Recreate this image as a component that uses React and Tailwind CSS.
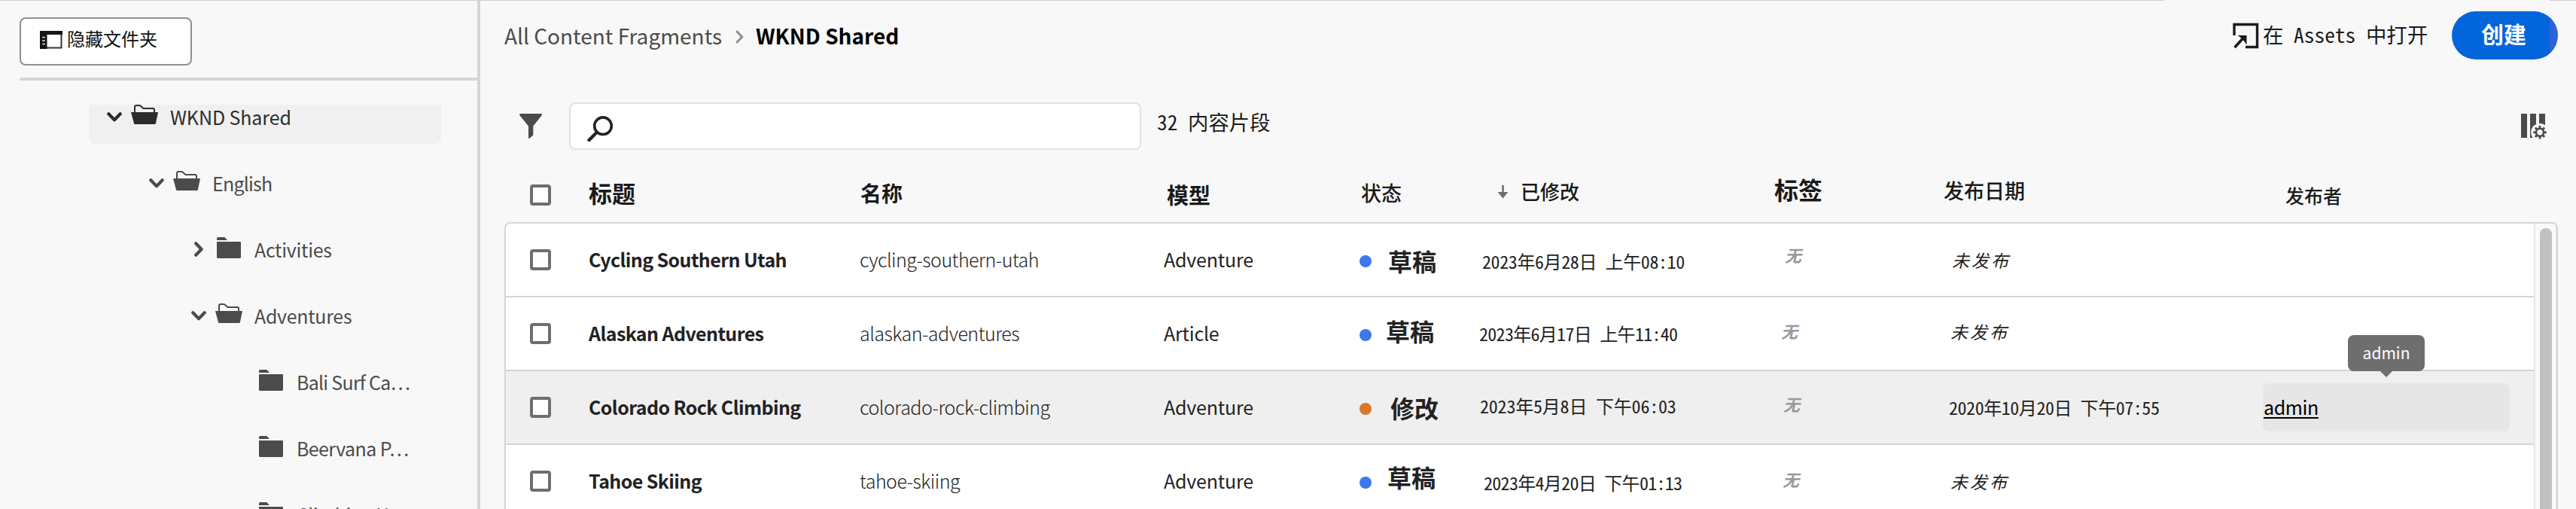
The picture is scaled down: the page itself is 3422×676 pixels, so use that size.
const COLS =
  "grid grid-cols-[110px_360px_404px_260px_159px_392px_225px_424px_360px] items-start";

const TREE = [
  { label: "WKND Shared", indent: "pl-[24px]", state: "open", active: true, tracking: "tracking-[-0.1px]" },
  { label: "English", indent: "pl-[80px]", state: "open", tracking: "tracking-[-0.8px]" },
  { label: "Activities", indent: "pl-[136px]", state: "closed" },
  { label: "Adventures", indent: "pl-[136px]", state: "open" },
  { label: "Bali Surf Ca…", indent: "pl-[192px]", state: "leaf", tracking: "tracking-[-0.75px]" },
  { label: "Beervana P…", indent: "pl-[192px]", state: "leaf", tracking: "tracking-[-0.6px]" },
  { label: "Climbing N…", indent: "pl-[192px]", state: "leaf", tracking: "tracking-[-0.6px]" },
];

const ROWS = [
  {
    title: "Cycling Southern Utah",
    name: "cycling-southern-utah",
    model: "Adventure",
    dot: "bg-[#3b78ee]",
    status: "草稿",
    statusPos: "pl-[22px] pt-[33px]",
    date: "2023年6月28日 上午08:10",
    datePos: "pl-[4px] pt-[38px] tracking-[-0.4px]",
    tagPos: "pl-[14px] pt-[30px]",
    pubPos: "pl-[11px] pt-[37px]",
  },
  {
    title: "Alaskan Adventures",
    name: "alaskan-adventures",
    model: "Article",
    dot: "bg-[#3b78ee]",
    status: "草稿",
    statusPos: "pl-[19px] pt-[28px]",
    date: "2023年6月17日 上午11:40",
    datePos: "pl-0 pt-[36px] tracking-[-0.7px]",
    tagPos: "pl-[9px] pt-[33px]",
    pubPos: "pl-[9px] pt-[34px]",
  },
  {
    title: "Colorado Rock Climbing",
    name: "colorado-rock-climbing",
    model: "Adventure",
    dot: "bg-[#d87829]",
    status: "修改",
    statusPos: "pl-[25px] pt-[32px]",
    date: "2023年5月8日 下午06:03",
    datePos: "pl-[1px] pt-[34px] tracking-[-0.2px]",
    tagPos: "pl-[12px] pt-[32px]",
    published: "2020年10月20日 下午07:55",
    pubPos: "pl-[7px] pt-[36px]",
    publisher: "admin",
  },
  {
    title: "Tahoe Skiing",
    name: "tahoe-skiing",
    model: "Adventure",
    dot: "bg-[#3b78ee]",
    status: "草稿",
    statusPos: "pl-[21px] pt-[26px]",
    date: "2023年4月20日 下午01:13",
    datePos: "pl-[6px] pt-[38px] tracking-[-0.7px]",
    tagPos: "pl-[11px] pt-[34px]",
    pubPos: "pl-[9px] pt-[37px]",
  },
];

function ChevronDown() {
  return (
    <svg className="mt-[10px] h-[13px] w-[20px]" viewBox="0 0 20 13" fill="none" stroke="currentColor" strokeWidth="4.2" strokeLinecap="round" strokeLinejoin="round">
      <path d="M2.3 2.3 10 10.2 17.7 2.3" />
    </svg>
  );
}

function ChevronRight() {
  return (
    <svg className="mt-[6px] ml-[4px] h-[20px] w-[12px]" viewBox="0 0 12 20" fill="none" stroke="currentColor" strokeWidth="4.2" strokeLinecap="round" strokeLinejoin="round">
      <path d="M2.2 2.3 9.6 10 2.2 17.7" />
    </svg>
  );
}

function FolderOpen() {
  return (
    <svg className="h-[26px] w-[36px]" viewBox="0 0 36 26">
      <path d="M5 11V3.2Q5 1 7.2 1H11q1.4 0 2.3 1.2L16.5 5H29.5Q31 5 31 6.5V11" fill="none" stroke="currentColor" strokeWidth="2" />
      <path d="M0 10H36L32.9 25Q32.7 26 31.7 26H5.2Q4.2 26 4 25Z" fill="currentColor" />
    </svg>
  );
}

function FolderClosed() {
  return (
    <svg className="ml-[2px] h-[28px] w-[32px]" viewBox="0 0 32 28" fill="currentColor">
      <path d="M0 4V1.8Q0 0 1.8 0H9.5Q10.6 0 11.3 1L14 4Z" />
      <path d="M0 6H31Q32 6 32 7V26.6Q32 28 30.6 28H1.4Q0 28 0 26.6Z" />
    </svg>
  );
}

function Checkbox({ className }) {
  return <span className={`ml-[32px] block h-[28px] w-[28px] rounded-[4px] border-4 border-[#6e6e6e] bg-white ${className}`} />;
}

function Sidebar() {
  return (
    <aside className="flex w-[638px] shrink-0 flex-col border-r-4 border-[#d5d5d5] pt-[22px]">
      <button className="ml-[26px] flex h-[64px] w-[229px] shrink-0 items-start rounded-[8px] border-2 border-[#909090] bg-white pl-[25px] text-[24px] leading-none text-[#111]">
        <svg className="mt-[16px] h-[24px] w-[30px]" viewBox="0 0 30 24">
          <path d="M1.5 1H28.5V22.5H1.5Z" fill="#fff" stroke="#333" strokeWidth="2" />
          <path d="M0 0H30V5H9.5V24H0Z" fill="#151515" />
          <path d="M3 8.5H7M3 13H7M3 17.5H7" stroke="#ddd" strokeWidth="1.6" />
        </svg>
        <span className="pt-[14px] pl-[6px] whitespace-nowrap">隐藏文件夹</span>
      </button>
      <div className="mt-4 ml-[26px] h-1 w-[608px] shrink-0 rounded-l-full bg-[#d5d5d5]" />
      <ul className="mt-8 ml-[118px] w-[468px] text-[25px] leading-none text-[#4b4b4b]">
        {TREE.map((n) => (
          <li key={n.label} className={`flex h-[88px] items-start ${n.active ? "text-[#2c2c2c]" : ""}`}>
            <div className={`flex h-[52px] w-full items-start rounded-b-lg ${n.indent} ${n.active ? "bg-[#f0f0f0]" : ""}`}>
              <span className="w-8 shrink-0">
                {n.state === "open" && <ChevronDown />}
                {n.state === "closed" && <ChevronRight />}
              </span>
              <span className="w-[52px] shrink-0">{n.state === "open" ? <FolderOpen /> : <FolderClosed />}</span>
              <span className={`pt-[4px] whitespace-nowrap ${n.tracking || "tracking-[-0.3px]"}`}>{n.label}</span>
            </div>
          </li>
        ))}
      </ul>
    </aside>
  );
}

function TopBar() {
  return (
    <header className="flex h-[135px] items-start leading-none">
      <nav className="flex items-start pt-[32px] text-[28px]">
        <span className="w-[307px] whitespace-nowrap text-[#4b4b4b]">All Content Fragments</span>
        <svg className="mt-[7px] h-[18px] w-[11px]" viewBox="0 0 11 18" fill="none" stroke="#8e8e8e" strokeWidth="3" strokeLinecap="round" strokeLinejoin="round">
          <path d="M2 2 8.8 9 2 16" />
        </svg>
        <span className="pl-[16px] font-bold whitespace-nowrap text-black">WKND Shared</span>
      </nav>
      <div className="ml-auto flex items-start">
        <svg className="mt-[29px] h-[35px] w-[35px]" viewBox="0 0 35 35" fill="none" stroke="#1c1c1c">
          <path d="M2 17V2.5H32.5V32.5H17" strokeWidth="3.4" />
          <path d="M2.5 33 14 20.5" strokeWidth="3.6" />
          <path d="M6.5 17H18.5V29.5L14.5 24 10 19.5Z" fill="#1c1c1c" stroke="none" />
        </svg>
        <span className="w-[256px] pt-[31px] pl-[5px] text-[27.4px] whitespace-nowrap text-[#1a1a1a] [font-feature-settings:'hwid']">
          在 Assets 中打开
        </span>
        <button className="mt-[14px] flex h-[64px] w-[141px] items-start overflow-hidden rounded-full bg-[#0265dc] bg-[linear-gradient(90deg,#0265dc_130px,#2d63d6_130px)] pt-[14px] pl-[39px] text-[30px] leading-none font-bold text-white">
          创建
        </button>
      </div>
    </header>
  );
}

function Toolbar() {
  return (
    <div className="flex h-[94px] items-start pl-[20px]">
      <svg className="mt-[15px] h-[33px] w-[30px]" viewBox="0 0 30 33" fill="#4b4b4b">
        <path d="M0.6 0H29.4Q30.3 1 29.6 2.2L18.3 16.5V28.6L13.4 32.8Q12 33.3 12 31.8V16.5L0.4 2.2Q-.3 1 .6 0Z" />
      </svg>
      <div className="ml-[36px] h-[63px] w-[760px] rounded-lg border-2 border-[#e1e1e1] bg-white">
        <svg className="mt-[16px] ml-[22px] h-[35px] w-[35px]" viewBox="0 0 35 35" fill="none" stroke="#222" strokeLinecap="round">
          <circle cx="21" cy="13.2" r="11.3" strokeWidth="3.6" />
          <path d="M13 21.5 2.5 32" strokeWidth="4.4" />
        </svg>
      </div>
      <span className="pt-[12px] pl-[21px] text-[27.4px] leading-none whitespace-nowrap text-[#1a1a1a] [font-feature-settings:'hwid']">
        32 内容片段
      </span>
      <svg className="mt-[15px] mr-[13px] ml-auto h-[36px] w-[36px]" viewBox="0 0 36 36">
        <path d="M0 0H8V32H0ZM12 0H20V32H12ZM24 0H32V20H24Z" fill="#4b4b4b" />
        <circle cx="25" cy="24.7" r="11.8" fill="#f8f8f8" />
        <circle cx="25" cy="24.7" r="5" fill="none" stroke="#4b4b4b" strokeWidth="2.6" />
        <path d="M25 16V19M25 30.4V33.4M16.3 24.7H19.3M30.7 24.7H33.7M18.85 18.55 21 20.7M29 28.7 31.15 30.85M18.85 30.85 21 28.7M29 20.7 31.15 18.55" stroke="#4b4b4b" strokeWidth="2.9" />
      </svg>
    </div>
  );
}

function TableHead() {
  return (
    <div className={`ml-[2px] h-[65px] leading-none font-medium text-[#1a1a1a] ${COLS}`}>
      <Checkbox className="mt-[15px]" />
      <span className="pt-[10px] text-[31px] font-bold">标题</span>
      <span className="pt-[12px] pl-px text-[28px] font-bold">名称</span>
      <span className="pt-[14px] pl-[4px] text-[29px] font-bold">模型</span>
      <span className="pt-[12px] pl-[2px] text-[27px]">状态</span>
      <span className="flex items-start pl-[24px] text-[26px]">
        <svg className="mt-[16px] mr-[16px] h-[18px] w-[15px]" viewBox="0 0 15 18" fill="none" stroke="#6e6e6e" strokeWidth="2.6">
          <path d="M7.5 0V15" />
          <path d="M0.5 9H14.5L7.5 17.5Z" fill="#6e6e6e" stroke="none" />
        </svg>
        <span className="pt-[11px]">已修改</span>
      </span>
      <span className="pt-[5px] text-[32px] font-bold">标签</span>
      <span className="pt-[9px] text-[27px]">发布日期</span>
      <span className="pt-[17px] pl-[30px] text-[25px]">发布者</span>
    </div>
  );
}

function Row({ row }) {
  return (
    <div className={`h-[98px] border-b-2 border-[#d5d5d5] leading-none whitespace-nowrap ${COLS} ${row.publisher ? "bg-[#efefef]" : "bg-white"}`}>
      <Checkbox className="mt-[34px]" />
      <span className="pt-[35px] text-[25px] font-bold tracking-[-0.6px] text-[#222]">{row.title}</span>
      <span className="pt-[35px] text-[25px] font-light tracking-[-0.5px] text-[#222]">{row.name}</span>
      <span className="pt-[35px] text-[25px] tracking-[-0.2px] text-[#222]">{row.model}</span>
      <span className="flex items-start">
        <i className={`mt-[42px] block h-4 w-4 rounded-full ${row.dot}`} />
        <span className={`text-[32px] font-bold text-[#222] ${row.statusPos}`}>{row.status}</span>
      </span>
      <span className={`text-[24px] text-[#222] [font-feature-settings:'hwid'] ${row.datePos}`}>{row.date}</span>
      <span className={`text-[22px] font-bold text-[#999] italic ${row.tagPos}`}>无</span>
      {row.published ? (
        <span className={`text-[24px] tracking-[-0.45px] text-[#222] [font-feature-settings:'hwid'] ${row.pubPos}`}>{row.published}</span>
      ) : (
        <span className={`text-[23px] tracking-[3px] text-[#222] italic ${row.pubPos}`}>未发布</span>
      )}
      {row.publisher && (
        <div className="relative pt-4">
          <div className="h-[64px] w-[328px] rounded-lg bg-[#e6e6e6] pt-[19px] pl-px">
            <a className="text-[25px] tracking-[-0.4px] text-black underline decoration-2 underline-offset-[3px]">{row.publisher}</a>
          </div>
          <div className="absolute -top-[48px] left-[113px] flex flex-col items-center">
            <div className="h-[48px] w-[102px] rounded-lg bg-[#6e6e6e] pt-[13px] text-center text-[21px] leading-none text-white">{row.publisher}</div>
            <div className="h-2 w-4 bg-[#6e6e6e] [clip-path:polygon(0_0,100%_0,50%_100%)]" />
          </div>
        </div>
      )}
    </div>
  );
}

export default function App() {
  return (
    <div className="flex h-[676px] w-[3422px] flex-col overflow-hidden bg-[#f8f8f8] font-['Noto_Sans_CJK_SC',sans-serif]">
      <div className="flex h-px shrink-0 justify-between">
        <div className="w-[2875px] bg-[#d0d0d0]" />
        <div className="w-[35px] bg-[#d0d0d0]" />
      </div>
      <div className="flex min-h-0 flex-1">
        <Sidebar />
        <main className="flex min-w-0 flex-1 flex-col pr-6 pl-8">
          <TopBar />
          <Toolbar />
          <TableHead />
          <div className="flex min-h-0 flex-1 overflow-hidden rounded-t-lg border-2 border-b-0 border-[#d5d5d5]">
            <div className="w-[2694px] shrink-0">
              {ROWS.map((r) => (
                <Row key={r.name} row={r} />
              ))}
            </div>
            <div className="flex flex-1 border-r border-l-2 border-[#e6e6e6] bg-[#fafafa] pt-[6px] pl-[6px]">
              <div className="w-4 rounded-t-full bg-[#c1c1c1]" />
            </div>
          </div>
        </main>
      </div>
    </div>
  );
}
